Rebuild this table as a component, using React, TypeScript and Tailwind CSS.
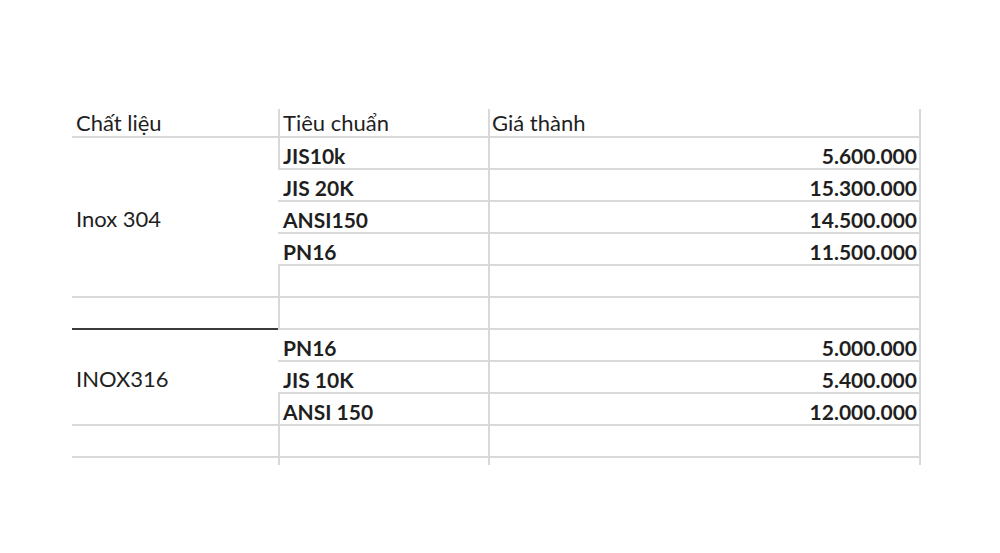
import React from "react";

type Row = {
  std: string;
  price: string;
  // vertical line between the material column and the standard column
  leftLine: boolean;
};

const rows: Row[] = [
  { std: "JIS10k", price: "5.600.000", leftLine: true },
  { std: "JIS 20K", price: "15.300.000", leftLine: false },
  { std: "ANSI150", price: "14.500.000", leftLine: false },
  { std: "PN16", price: "11.500.000", leftLine: false },
  { std: "", price: "", leftLine: true },
  { std: "", price: "", leftLine: true },
  { std: "PN16", price: "5.000.000", leftLine: false },
  { std: "JIS 10K", price: "5.400.000", leftLine: false },
  { std: "ANSI 150", price: "12.000.000", leftLine: true },
  { std: "", price: "", leftLine: true },
];

export default function App() {
  return (
    <div className="w-[1000px] h-[553px] bg-white pl-[72px] pt-[109px] font-['Lato','Liberation_Sans',sans-serif] text-[22px] text-[#1f1f1f] leading-none">
      <div className="grid grid-cols-[206px_210px_433px] grid-rows-[29px_repeat(10,32px)_7px]">
        {/* header */}
        <div className="col-start-1 row-start-1 border-b-2 border-[#d9d9d9] flex items-center pl-1">
          Chất liệu
        </div>
        <div className="col-start-2 row-start-1 border-b-2 border-l-2 border-[#d9d9d9] flex items-center pl-[3px]">
          Tiêu chuẩn
        </div>
        <div className="col-start-3 row-start-1 border-b-2 border-l-2 border-r-2 border-[#d9d9d9] flex items-center pl-[2px]">
          Giá thành
        </div>

        {/* material column */}
        <div className="col-start-1 row-start-2 row-span-5 border-b-2 border-[#d9d9d9] flex items-center pl-1 pt-1">
          Inox 304
        </div>
        <div className="col-start-1 row-start-7 border-b-2 border-[#3a3a3a]" />
        <div className="col-start-1 row-start-8 row-span-3 border-b-2 border-[#d9d9d9] flex items-center pl-1 pt-1">
          INOX316
        </div>
        <div className="col-start-1 row-start-11 border-b-2 border-[#d9d9d9]" />

        {rows.map((r, i) => (
          <React.Fragment key={i}>
            <div
              style={{ gridRowStart: i + 2 }}
              className={
                "col-start-2 border-b-2 border-[#d9d9d9] flex items-center pl-[3px] pt-1 font-bold text-[21px] " +
                (r.leftLine ? "border-l-2" : "pl-[5px]")
              }
            >
              {r.std}
            </div>
            <div
              style={{ gridRowStart: i + 2 }}
              className="col-start-3 border-b-2 border-l-2 border-r-2 border-[#d9d9d9] flex items-center justify-end pr-[2px] pt-1 font-bold text-[21px]"
            >
              {r.price}
            </div>
          </React.Fragment>
        ))}

        {/* tail where the grid lines run out */}
        <div className="col-start-2 row-start-12 border-l-2 border-[#d9d9d9]" />
        <div className="col-start-3 row-start-12 border-l-2 border-r-2 border-[#d9d9d9]" />
      </div>
    </div>
  );
}
